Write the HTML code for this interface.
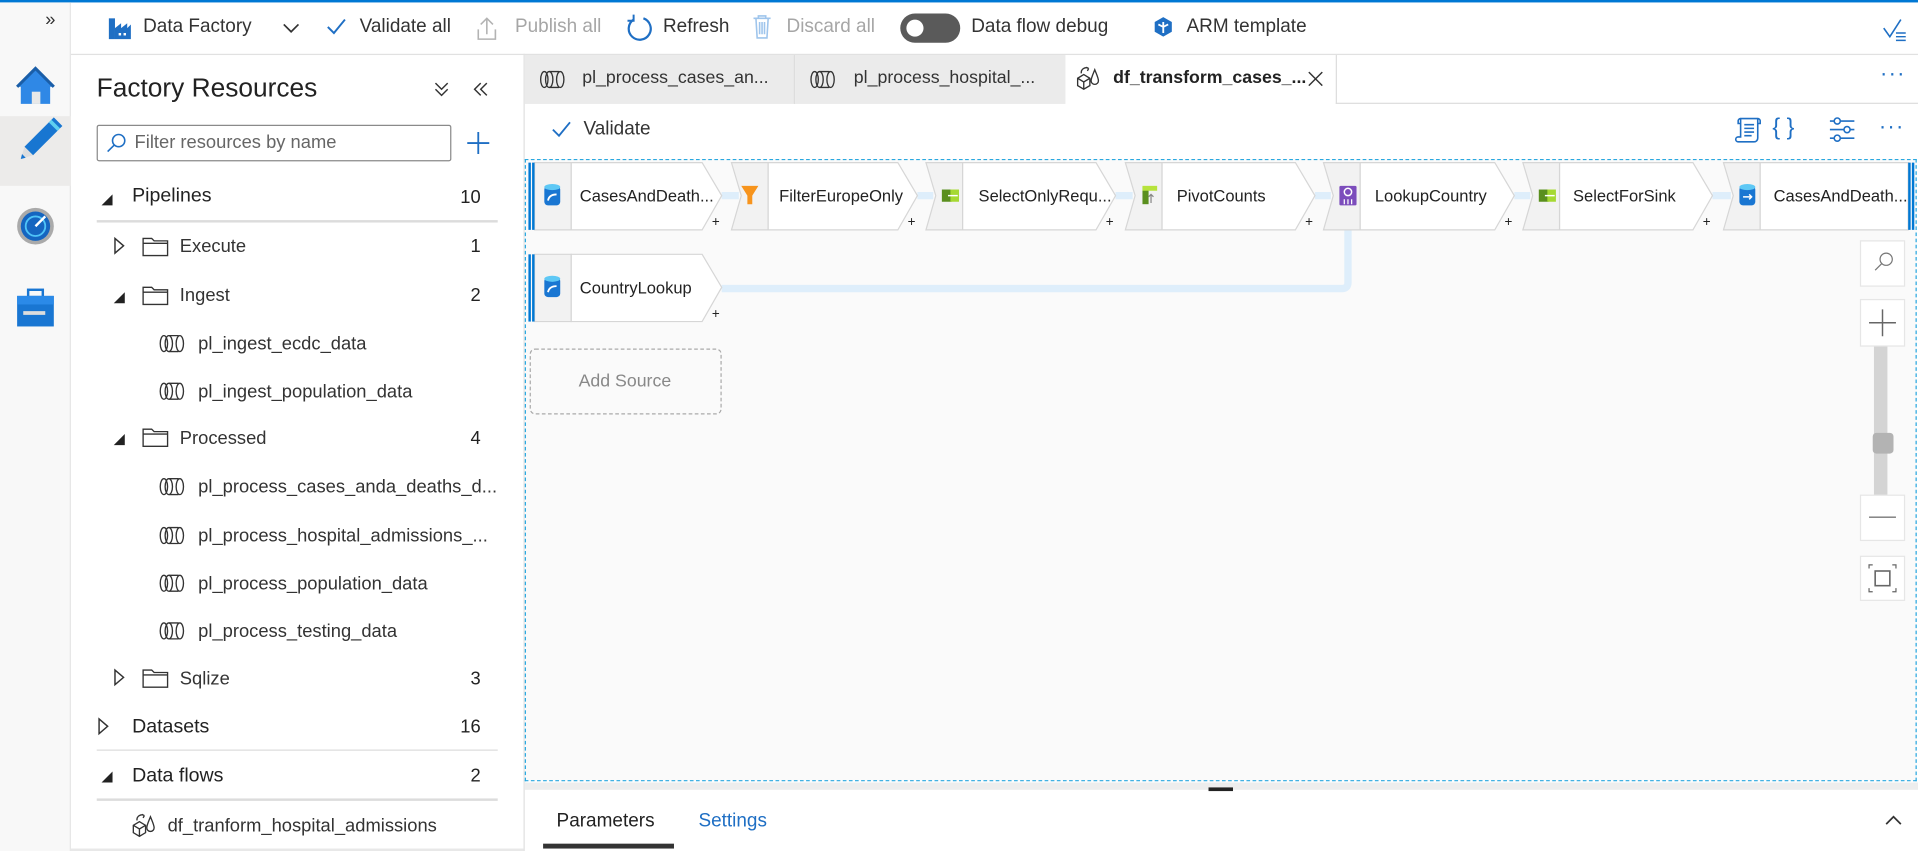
<!DOCTYPE html>
<html><head><meta charset="utf-8"><style>
*{box-sizing:border-box;margin:0;padding:0}
html,body{width:1918px;height:851px;overflow:hidden;background:#fff}
#w{position:absolute;left:0;top:0;width:1568px;height:696px;transform:scale(1.2232,1.2227);transform-origin:0 0;font-family:"Liberation Sans",sans-serif;color:#222}
.a{position:absolute;white-space:nowrap}
.tb{font-size:15.5px;color:#333}
.g{color:#a6a6a6}
.tr{font-size:15px;color:#333}
.cnt{font-size:15px;color:#222;right:0;width:30px;text-align:right}
.hd{font-size:16px;color:#222;font-weight:bold}
</style></head><body><div id="w">
<div class="a" style="left:0;top:0;width:1568px;height:2px;background:#0078d4"></div>
<div class="a" style="left:0;top:2px;width:58px;height:694px;background:#f8f8f8;border-right:1px solid #e6e6e6"></div>
<div class="a" style="left:37px;top:8px;font-size:15px;color:#333">»</div>
<div class="a" style="left:0;top:95px;width:58px;height:57px;background:#ecebea"></div>
<svg class="a" style="left:0;top:44px" width="58" height="230">
<path d="M14 27 L29 12 L44 27 L41 27 L41 41 L17 41 L17 27Z" fill="#2f88e6"/><path d="M14 27 L29 12 L44 27" fill="none" stroke="#1a5ea8" stroke-width="2.5"/><rect x="26" y="31" width="7" height="10" fill="#e8e8e8"/>
<path d="M20 76 L44 52 L51 59 L27 83Z" fill="#1876d1"/><path d="M41 55 L48 62" stroke="#5fd0f0" stroke-width="3"/><path d="M20 76 L27 83 L17 86Z" fill="#ddd"/><path d="M18 82 L21 85 L17 86Z" fill="#1876d1"/>
<circle cx="29" cy="141" r="15" fill="#aaa"/><circle cx="29" cy="141" r="12" fill="#1565c0"/><circle cx="29" cy="141" r="8" fill="none" stroke="#4fc3f7" stroke-width="1.5"/><path d="M29 141 L37 133" stroke="#fff" stroke-width="2"/>
<rect x="14" y="198" width="30" height="25" fill="#1976d2"/><rect x="23" y="193" width="12" height="6" fill="none" stroke="#1976d2" stroke-width="2"/><rect x="14" y="198" width="30" height="7" fill="#2b8ae8"/><path d="M19 212 L37 212" stroke="#ddd" stroke-width="3"/>
</svg>
<div class="a" style="left:58px;top:44px;width:1510px;height:1px;background:#e1e1e1"></div>
<svg class="a" style="left:88px;top:13px" width="20" height="20"><rect x="1" y="2" width="5" height="17" fill="#1f6fc4"/><path d="M6 10 L11 6 L11 10 L16 6 L16 10 L19 7 L19 19 L6 19Z" fill="#1f6fc4"/><rect x="9" y="14" width="2" height="2" fill="#fff"/><rect x="13" y="14" width="2" height="2" fill="#fff"/></svg>
<div class="a tb" style="left:117px;top:13px">Data Factory</div>
<svg class="a" style="left:230px;top:18px" width="16" height="10"><path d="M2 2 L8 8 L14 2" fill="none" stroke="#333" stroke-width="1.4"/></svg>
<svg class="a" style="left:266px;top:14px" width="18" height="16"><path d="M2 8 L7 13 L16 2" fill="none" stroke="#1f6fc4" stroke-width="1.6"/></svg>
<div class="a tb" style="left:294px;top:13px">Validate all</div>
<svg class="a" style="left:389px;top:12px" width="18" height="22"><path d="M9 16 V3 M4 8 L9 3 L14 8 M2 12 V20 H16 V12" fill="none" stroke="#b3b3b3" stroke-width="1.3"/></svg>
<div class="a tb g" style="left:421px;top:13px">Publish all</div>
<svg class="a" style="left:511px;top:11px" width="24" height="24"><path d="M7 5 A9 9 0 1 0 15 4" fill="none" stroke="#1f6fc4" stroke-width="1.8"/><path d="M7 1 L7 6 L2 6" fill="none" stroke="#1f6fc4" stroke-width="1.6"/></svg>
<div class="a tb" style="left:542px;top:13px">Refresh</div>
<svg class="a" style="left:614px;top:11px" width="18" height="22"><path d="M2 4 H16 M6 4 V2 H12 V4 M4 4 L5 20 H13 L14 4 M7 7 V17 M9 7 V17 M11 7 V17" fill="none" stroke="#9fc5ec" stroke-width="1.3"/></svg>
<div class="a tb g" style="left:643px;top:13px">Discard all</div>
<div class="a" style="left:736px;top:11px;width:49px;height:24px;border-radius:12px;background:#5a5a5a"></div>
<div class="a" style="left:741px;top:16px;width:14px;height:14px;border-radius:7px;background:#fff"></div>
<div class="a tb" style="left:794px;top:13px">Data flow debug</div>
<svg class="a" style="left:942px;top:13px" width="18" height="18"><path d="M9 1 L16 5 V13 L9 17 L2 13 V5Z" fill="#1f6fc4"/><path d="M9 5 V14 M5 7 L9 9 L13 7" fill="none" stroke="#fff" stroke-width="1.5"/></svg>
<div class="a tb" style="left:970px;top:13px">ARM template</div>
<svg class="a" style="left:1538px;top:13px" width="22" height="22"><path d="M2 10 L7 17 L16 3" fill="none" stroke="#1f6fc4" stroke-width="1.3"/><path d="M12 14 H20 M12 17 H20 M12 20 H20" stroke="#1f6fc4" stroke-width="1.2"/></svg>
<div class="a" style="left:79px;top:60px;font-size:21.5px;color:#222">Factory Resources</div>
<svg class="a" style="left:354px;top:66px" width="14" height="14"><path d="M2 2 L7 7 L12 2 M2 7 L7 12 L12 7" fill="none" stroke="#333" stroke-width="1.2"/></svg>
<svg class="a" style="left:386px;top:66px" width="14" height="14"><path d="M7 2 L2 7 L7 12 M12 2 L7 7 L12 12" fill="none" stroke="#333" stroke-width="1.2"/></svg>
<div class="a" style="left:79px;top:102px;width:290px;height:30px;border:1px solid #8a8a8a;border-radius:2px"></div>
<svg class="a" style="left:86px;top:108px" width="18" height="18"><circle cx="11" cy="7" r="5" fill="none" stroke="#1f6fc4" stroke-width="1.3"/><path d="M7.5 10.5 L2 16" stroke="#1f6fc4" stroke-width="1.3"/></svg>
<div class="a" style="left:110px;top:108px;font-size:15px;color:#666">Filter resources by name</div>
<svg class="a" style="left:381px;top:107px" width="20" height="20"><path d="M10 1 V19 M1 10 H19" stroke="#1f6fc4" stroke-width="1.5"/></svg>
<div class="a" style="left:79px;top:148px;width:328px;height:500px">
<svg class="a" style="left:0;top:0" width="328" height="540">
<g fill="#222"><path d="M4 20 L13 11 L13 20Z"/></g>
<rect x="0" y="32" width="328" height="2" fill="#dcdcdc"/>
<path d="M15 47 L22 53 L15 59Z" fill="none" stroke="#333" stroke-width="1.2"/>
<path d="M14 100 L23 91 L23 100Z" fill="#222"/>
<path d="M14 216 L23 207 L23 216Z" fill="#222"/>
<path d="M15 400 L22 406 L15 412Z" fill="none" stroke="#333" stroke-width="1.2"/>
<path d="M2 440 L9 446 L2 452Z" fill="none" stroke="#333" stroke-width="1.2"/>
<rect x="0" y="465" width="328" height="1" fill="#dcdcdc"/>
<path d="M4 492 L13 483 L13 492Z" fill="#222"/>
<rect x="0" y="505" width="328" height="2" fill="#dcdcdc"/>
<g fill="none" stroke="#333" stroke-width="1.1">
<path d="M38 47 H45 L47 49 H58 V61 H38Z M38 51 H58"/>
<path d="M38 87 H45 L47 89 H58 V101 H38Z M38 91 H58"/>
<path d="M38 203 H45 L47 205 H58 V217 H38Z M38 207 H58"/>
<path d="M38 400 H45 L47 402 H58 V414 H38Z M38 404 H58"/>
</g>
<g fill="none" stroke="#333" stroke-width="1.1">
<g transform="translate(51,126)"><ellipse cx="4" cy="7" rx="3" ry="6.5"/><ellipse cx="8" cy="7" rx="3" ry="6.5"/><path d="M8 .5 H16 M8 13.5 H16"/><ellipse cx="17" cy="7" rx="3" ry="6.5"/></g>
<g transform="translate(51,165)"><ellipse cx="4" cy="7" rx="3" ry="6.5"/><ellipse cx="8" cy="7" rx="3" ry="6.5"/><path d="M8 .5 H16 M8 13.5 H16"/><ellipse cx="17" cy="7" rx="3" ry="6.5"/></g>
<g transform="translate(51,243)"><ellipse cx="4" cy="7" rx="3" ry="6.5"/><ellipse cx="8" cy="7" rx="3" ry="6.5"/><path d="M8 .5 H16 M8 13.5 H16"/><ellipse cx="17" cy="7" rx="3" ry="6.5"/></g>
<g transform="translate(51,283)"><ellipse cx="4" cy="7" rx="3" ry="6.5"/><ellipse cx="8" cy="7" rx="3" ry="6.5"/><path d="M8 .5 H16 M8 13.5 H16"/><ellipse cx="17" cy="7" rx="3" ry="6.5"/></g>
<g transform="translate(51,322)"><ellipse cx="4" cy="7" rx="3" ry="6.5"/><ellipse cx="8" cy="7" rx="3" ry="6.5"/><path d="M8 .5 H16 M8 13.5 H16"/><ellipse cx="17" cy="7" rx="3" ry="6.5"/></g>
<g transform="translate(51,361)"><ellipse cx="4" cy="7" rx="3" ry="6.5"/><ellipse cx="8" cy="7" rx="3" ry="6.5"/><path d="M8 .5 H16 M8 13.5 H16"/><ellipse cx="17" cy="7" rx="3" ry="6.5"/></g>
<g transform="translate(29,517)"><path d="M1 10 L6 7 L11 10 V16 L6 19 L1 16Z M1 10 L6 13 L11 10 M6 13 V19"/><path d="M15 3 C13 8 12 10 12 12 A3 3 0 0 0 18 12 C18 10 17 8 15 3Z"/><path d="M4 6 A4 4 0 0 1 10 2 M10 2 L8 1 M10 2 L9 4"/></g>
</g>
</svg>
<div class="a" style="left:29px;top:4px;font-size:16px">Pipelines</div><div class="a cnt" style="top:5px;right:14px">10</div>
<div class="a tr" style="left:68px;top:45px">Execute</div><div class="a cnt" style="top:45px;right:14px">1</div>
<div class="a tr" style="left:68px;top:85px">Ingest</div><div class="a cnt" style="top:85px;right:14px">2</div>
<div class="a tr" style="left:83px;top:125px">pl_ingest_ecdc_data</div>
<div class="a tr" style="left:83px;top:164px">pl_ingest_population_data</div>
<div class="a tr" style="left:68px;top:202px">Processed</div><div class="a cnt" style="top:202px;right:14px">4</div>
<div class="a tr" style="left:83px;top:242px">pl_process_cases_anda_deaths_d...</div>
<div class="a tr" style="left:83px;top:282px">pl_process_hospital_admissions_...</div>
<div class="a tr" style="left:83px;top:321px">pl_process_population_data</div>
<div class="a tr" style="left:83px;top:360px">pl_process_testing_data</div>
<div class="a tr" style="left:68px;top:399px">Sqlize</div><div class="a cnt" style="top:399px;right:14px">3</div>
<div class="a" style="left:29px;top:438px;font-size:16px">Datasets</div><div class="a cnt" style="top:438px;right:14px">16</div>
<div class="a" style="left:29px;top:478px;font-size:16px">Data flows</div><div class="a cnt" style="top:478px;right:14px">2</div>
<div class="a tr" style="left:58px;top:519px">df_tranform_hospital_admissions</div>
</div>
<div class="a" style="left:428px;top:44px;width:1px;height:652px;background:#e1e1e1"></div>
<div class="a" style="left:58px;top:694px;width:370px;height:2px;background:#e8e8e8"></div>
<div class="a" style="left:429px;top:45px;width:221px;height:40px;background:#ebebeb;border-right:1px solid #ddd"></div>
<div class="a" style="left:650px;top:45px;width:221px;height:40px;background:#ebebeb"></div>
<div class="a" style="left:1092px;top:84px;width:476px;height:1px;background:#ddd"></div>
<div class="a" style="left:1092px;top:45px;width:1px;height:40px;background:#ddd"></div>
<svg class="a" style="left:441px;top:57px" width="250" height="18"><g fill="none" stroke="#333" stroke-width="1.1"><g transform="translate(0,1)"><ellipse cx="4" cy="7" rx="3" ry="6.5"/><ellipse cx="8" cy="7" rx="3" ry="6.5"/><path d="M8 .5 H16 M8 13.5 H16"/><ellipse cx="17" cy="7" rx="3" ry="6.5"/></g><g transform="translate(221,1)"><ellipse cx="4" cy="7" rx="3" ry="6.5"/><ellipse cx="8" cy="7" rx="3" ry="6.5"/><path d="M8 .5 H16 M8 13.5 H16"/><ellipse cx="17" cy="7" rx="3" ry="6.5"/></g></g></svg>
<svg class="a" style="left:880px;top:54px" width="22" height="22"><g fill="none" stroke="#333" stroke-width="1.1"><path d="M1 10 L6 7 L11 10 V16 L6 19 L1 16Z M1 10 L6 13 L11 10 M6 13 V19"/><path d="M15 3 C13 8 12 10 12 12 A3 3 0 0 0 18 12 C18 10 17 8 15 3Z"/><path d="M4 6 A4 4 0 0 1 10 2 M10 2 L8 1 M10 2 L9 4"/></g></svg>
<div class="a tb" style="left:476px;top:56px;font-size:14.5px">pl_process_cases_an...</div>
<div class="a tb" style="left:698px;top:56px;font-size:14.5px">pl_process_hospital_...</div>
<div class="a tb" style="left:910px;top:56px;font-size:14.5px;color:#222;font-weight:bold">df_transform_cases_...</div>
<svg class="a" style="left:1069px;top:58px" width="13" height="13"><path d="M1 1 L12 12 M12 1 L1 12" stroke="#333" stroke-width="1.2"/></svg>
<div class="a" style="left:1537px;top:50px;font-size:18px;color:#1f6fc4;letter-spacing:1px">···</div>
<svg class="a" style="left:450px;top:98px" width="18" height="16"><path d="M2 8 L7 13 L16 2" fill="none" stroke="#1f6fc4" stroke-width="1.5"/></svg>
<div class="a tb" style="left:477px;top:97px">Validate</div>
<svg class="a" style="left:1417px;top:95px" width="24" height="24"><g fill="none" stroke="#1f6fc4" stroke-width="1.3"><path d="M6 2 H20 V18 A3 3 0 0 1 17 21 H4 A2 2 0 0 1 4 17 H6Z M6 2 A2 2 0 0 0 4 4 V6 H6 M20 2 A2 2 0 0 1 22 4 V6 H20"/><path d="M9 7 H17 M9 10 H17 M9 13 H17 M9 16 H15"/></g></svg>
<div class="a" style="left:1449px;top:94px;font-size:19px;color:#1f6fc4">{ }</div>
<svg class="a" style="left:1494px;top:95px" width="24" height="22"><g fill="none" stroke="#1f6fc4" stroke-width="1.3"><path d="M2 4 H22 M2 11 H22 M2 18 H22"/><circle cx="8" cy="4" r="2.5" fill="#fff"/><circle cx="16" cy="11" r="2.5" fill="#fff"/><circle cx="8" cy="18" r="2.5" fill="#fff"/></g></svg>
<div class="a" style="left:1536px;top:93px;font-size:18px;color:#1f6fc4;letter-spacing:1px">···</div>
<div class="a" style="left:429px;top:130px;width:1138px;height:509px;background:#fafafa;border:1px dashed #29a8e0"></div>
<svg class="a" style="left:0;top:0" width="1568" height="696">
<path d="M590 236 H1097 Q1102 236 1102 231 V188" fill="none" stroke="#deeefb" stroke-width="6"/>
<g fill="none" stroke="#deeefb" stroke-width="6"><path d="M590 160 H604 M750 160 H763 M912 160 H926 M1075 160 H1088 M1238 160 H1251 M1400 160 H1415"/></g>
<g stroke="#d6d6d6" stroke-width="1">
<path d="M437 133 H467 V188 H437Z" fill="#f2f2f2"/><path d="M467 133 H574 L590 160 L574 188 H467Z" fill="#fff"/>
<path d="M598 133 H628 V188 H598 L606 160Z" fill="#f2f2f2"/><path d="M628 133 H734 L750 160 L734 188 H628Z" fill="#fff"/>
<path d="M757 133 H787 V188 H757 L765 160Z" fill="#f2f2f2"/><path d="M787 133 H896 L912 160 L896 188 H787Z" fill="#fff"/>
<path d="M920 133 H950 V188 H920 L928 160Z" fill="#f2f2f2"/><path d="M950 133 H1059 L1075 160 L1059 188 H950Z" fill="#fff"/>
<path d="M1082 133 H1112 V188 H1082 L1090 160Z" fill="#f2f2f2"/><path d="M1112 133 H1222 L1238 160 L1222 188 H1112Z" fill="#fff"/>
<path d="M1245 133 H1275 V188 H1245 L1253 160Z" fill="#f2f2f2"/><path d="M1275 133 H1384 L1400 160 L1384 188 H1275Z" fill="#fff"/>
<path d="M1409 133 H1439 V188 H1409 L1417 160Z" fill="#f2f2f2"/><path d="M1439 133 H1560 V188 H1439Z" fill="#fff"/>
<path d="M437 208 H467 V263 H437Z" fill="#f2f2f2"/><path d="M467 208 H574 L590 235 L574 263 H467Z" fill="#fff"/>
</g>
<rect x="432" y="133" width="2" height="55" fill="#0078d4"/><rect x="435" y="133" width="2" height="55" fill="#0078d4"/>
<rect x="432" y="208" width="2" height="55" fill="#0078d4"/><rect x="435" y="208" width="2" height="55" fill="#0078d4"/>
<rect x="1560" y="133" width="2" height="55" fill="#0078d4"/><rect x="1563" y="133" width="2" height="55" fill="#0078d4"/>
<g><rect x="445" y="152" width="13" height="16" rx="3" fill="#1976d2"/><ellipse cx="451.5" cy="153" rx="6.5" ry="2.5" fill="#5ec8f5"/><path d="M448 164 Q449 159 455 159" fill="none" stroke="#fff" stroke-width="1.5"/></g>
<g><rect x="445" y="227" width="13" height="16" rx="3" fill="#1976d2"/><ellipse cx="451.5" cy="228" rx="6.5" ry="2.5" fill="#5ec8f5"/><path d="M448 239 Q449 234 455 234" fill="none" stroke="#fff" stroke-width="1.5"/></g>
<path d="M606 152 H620 L615 160 V167 H611 V160Z" fill="#f7941d"/>
<g><rect x="770" y="155" width="8" height="10" fill="#5a8f1e"/><rect x="777" y="155" width="7" height="10" fill="#a6d932"/><path d="M775 160 H783" stroke="#fff" stroke-width="1.2"/></g>
<g><rect x="934" y="153" width="5" height="14" fill="#5a8f1e"/><rect x="934" y="152" width="12" height="4" fill="#b7e33c"/><path d="M941 166 V159 M939 161 L941 159 L943 161" stroke="#888" fill="none"/></g>
<g><rect x="1095" y="152" width="14" height="16" rx="1" fill="#7c4dbc"/><circle cx="1102" cy="157" r="3" fill="none" stroke="#fff" stroke-width="1.2"/><path d="M1099 163 V167 M1102 163 V167 M1105 163 V167" stroke="#fff"/></g>
<g><rect x="1258" y="155" width="8" height="10" fill="#5a8f1e"/><rect x="1265" y="155" width="7" height="10" fill="#a6d932"/><path d="M1263 160 H1271" stroke="#fff" stroke-width="1.2"/></g>
<g><rect x="1422" y="152" width="13" height="16" rx="3" fill="#1976d2"/><ellipse cx="1428.5" cy="153" rx="6.5" ry="2.5" fill="#5ec8f5"/><path d="M1425 161 H1432 M1430 159 L1432 161 L1430 163" fill="none" stroke="#fff" stroke-width="1.2"/></g>
<g font-family="Liberation Sans" font-size="11" fill="#222"><text x="582" y="185">+</text><text x="742" y="185">+</text><text x="904" y="185">+</text><text x="1067" y="185">+</text><text x="1230" y="185">+</text><text x="1392" y="185">+</text><text x="582" y="260">+</text></g>
<g font-family="Liberation Sans" font-size="13.5" fill="#222"><text x="474" y="165">CasesAndDeath...</text><text x="637" y="165">FilterEuropeOnly</text><text x="800" y="165">SelectOnlyRequ...</text><text x="962" y="165">PivotCounts</text><text x="1124" y="165">LookupCountry</text><text x="1286" y="165">SelectForSink</text><text x="1450" y="165">CasesAndDeath...</text><text x="474" y="240">CountryLookup</text></g>
<rect x="433.5" y="285.5" width="156" height="53" rx="4" fill="none" stroke="#aaa" stroke-dasharray="3 2"/>
<text x="473" y="316" font-family="Liberation Sans" font-size="14.5" fill="#888">Add Source</text>
<rect x="1532" y="283" width="11" height="123" fill="#d4d4d4"/>
<rect x="1531" y="354" width="17" height="17" rx="3" fill="#b3b3b3"/>
<g fill="#fff" stroke="#e6e6e6"><rect x="1521" y="197" width="36" height="37"/><rect x="1521" y="245" width="36" height="38"/><rect x="1521" y="405" width="36" height="37"/><rect x="1521" y="455" width="36" height="36"/></g>
<circle cx="1542" cy="212" r="5" fill="none" stroke="#777" stroke-width="1"/><path d="M1538.5 215.5 L1533 221" stroke="#777"/>
<path d="M1539 253 V275 M1528 264 H1550" stroke="#666" stroke-width="1.2"/>
<path d="M1528 423 H1550" stroke="#777" stroke-width="1.2"/>
<rect x="1533" y="467" width="12" height="12" fill="none" stroke="#666" stroke-width="1.3"/>
<path d="M1528 465 V462 H1531 M1547 462 H1550 V465 M1528 481 V484 H1531 M1547 484 H1550 V481" fill="none" stroke="#666"/>
</svg>
<div class="a" style="left:429px;top:640px;width:1139px;height:6px;background:#ededed"></div>
<div class="a" style="left:988px;top:644px;width:20px;height:3px;background:#222"></div>
<div class="a tb" style="left:455px;top:663px;color:#222">Parameters</div>
<div class="a" style="left:444px;top:690px;width:107px;height:4px;background:#333"></div>
<div class="a tb" style="left:571px;top:663px;color:#1f6fc4">Settings</div>
<svg class="a" style="left:1540px;top:666px" width="16" height="10"><path d="M2 8 L8 2 L14 8" fill="none" stroke="#333" stroke-width="1.4"/></svg>
</div></body></html>
